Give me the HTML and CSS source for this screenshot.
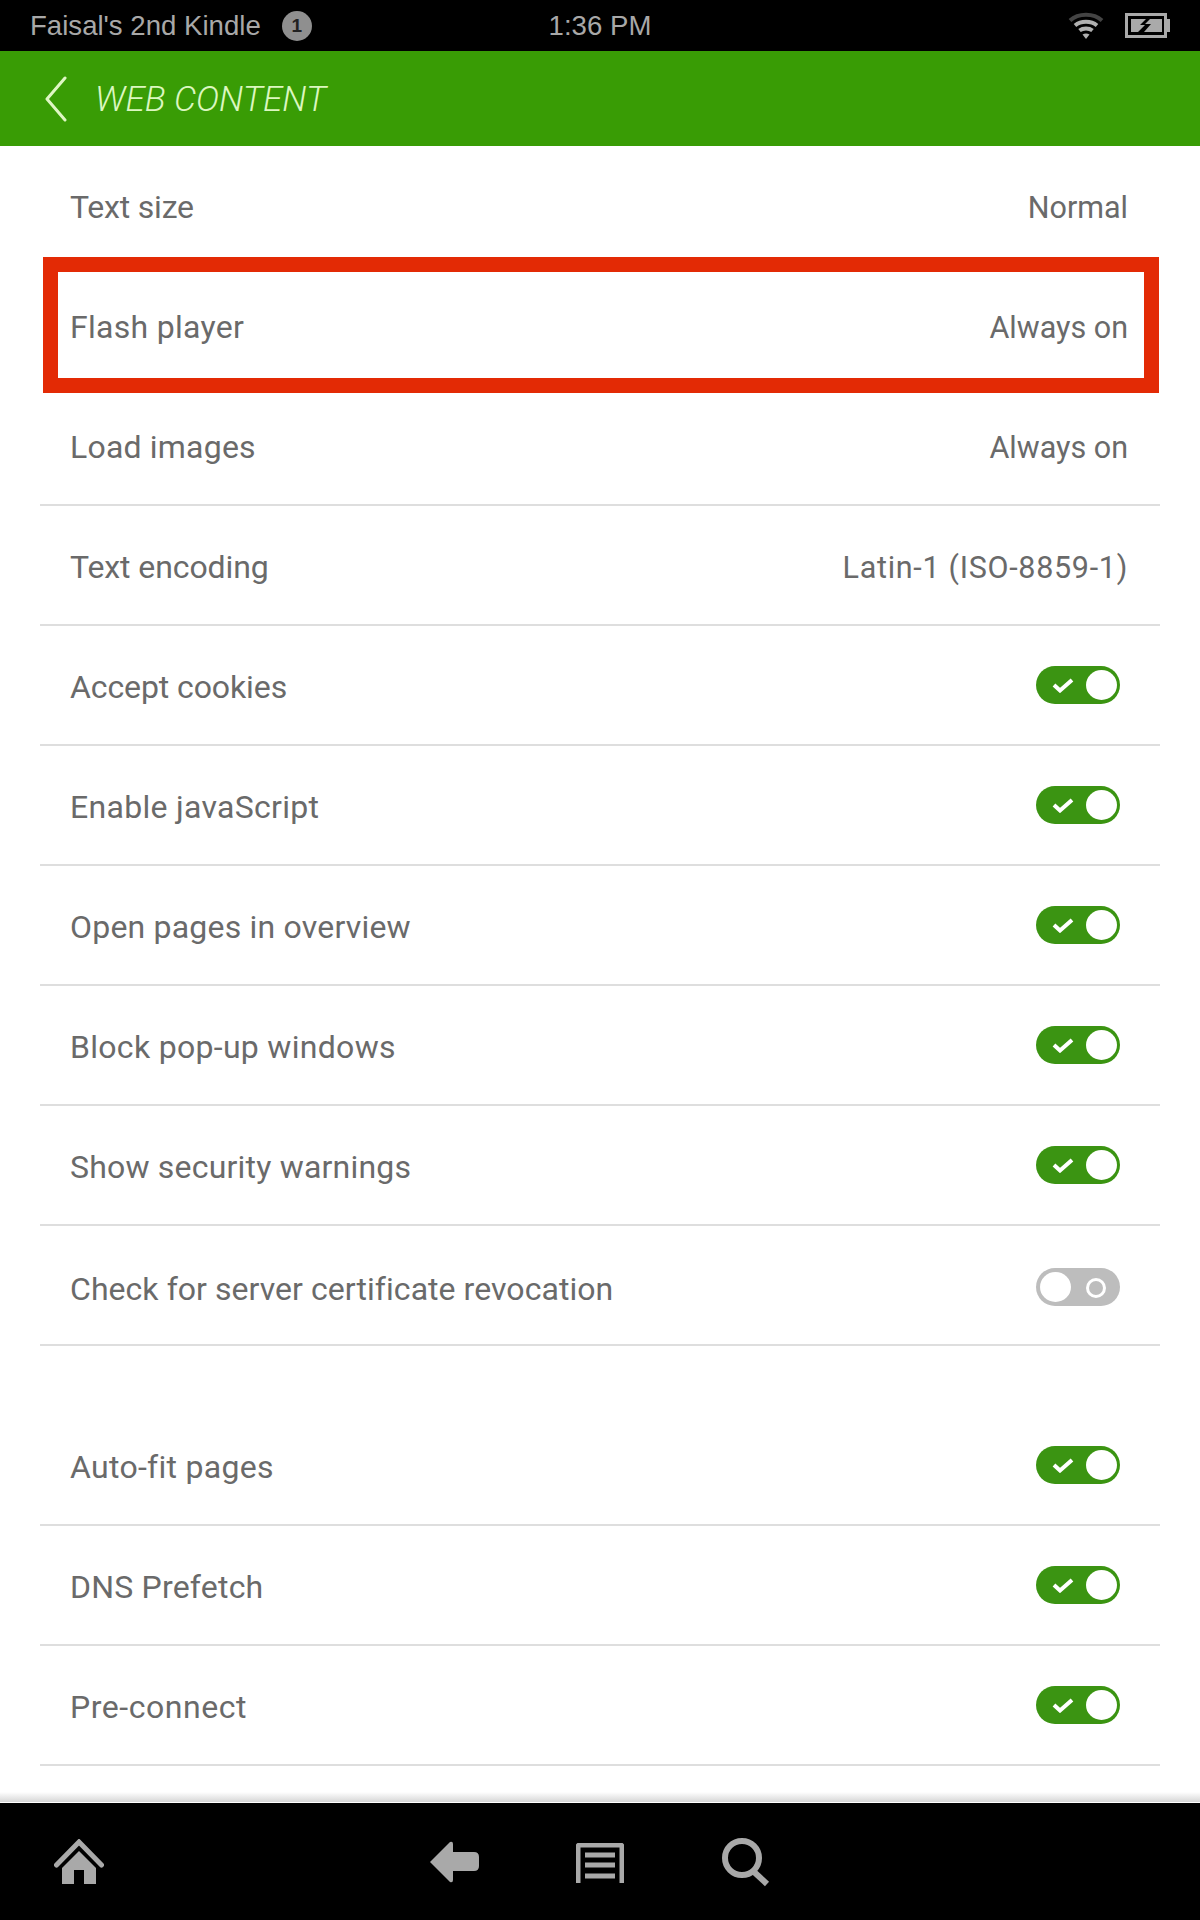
FILE: index.html
```html
<!DOCTYPE html>
<html lang="en">
<head>
<meta charset="utf-8">
<title>Web Content</title>
<link rel="stylesheet" href="styles.css">
</head>
<body>
<div class="screen">
  <div class="status">
    <div class="status-left"><span>Faisal's 2nd Kindle</span><span class="badge">1</span></div>
    <div class="status-time">1:36 PM</div>
    <div class="status-right">
      <svg class="wifi" width="36" height="28" viewBox="0 0 36 28"><path d="M2 8.500C10.500 0.800 25.500 0.800 34 8.500" class="wifi-dim"/><path d="M7 13.500C13 8.500 23 8.500 29 13.500M11.500 18.500C15 15.800 21 15.800 24.500 18.500" class="wifi-on"/><path d="M14.500 22.500Q18 20.500 21.500 22.500L18 27Z" class="wifi-dot"/></svg>
      <svg class="battery" width="45" height="25" viewBox="0 0 45 25"><path d="M1.500 1.500H40.500V23.500H1.500Z" class="batt-body"/><rect x="41" y="6" width="4" height="13" class="batt-fill"/><path d="M6 6H21L15 12H20L13 19H6ZM37 6H25L20 11H26L19 19H37Z" class="batt-fill"/></svg>
    </div>
  </div>
  <div class="header">
    <svg class="chevron" width="24" height="46" viewBox="0 0 24 46"><path d="M21 2L3 23L21 44"/></svg>
    <h1 class="title">WEB CONTENT</h1>
  </div>
  <main class="content">
    <div class="group">
      <div class="row plain"><span class="tighter">Text size</span><span class="value">Normal</span></div>
      <div class="row plain"><span class="wide">Flash player</span><span class="value">Always on</span><div class="highlight"></div></div>
      <div class="row"><span>Load images</span><span class="value">Always on</span></div>
      <div class="row"><span class="tight">Text encoding</span><span class="value spaced">Latin-1 (ISO-8859-1)</span></div>
      <div class="row"><span class="tight">Accept cookies</span><span class="toggle on"><svg width="22" height="16" viewBox="0 0 22 16"><path d="M2 8L8 13.500L20 3"/></svg><i></i></span></div>
      <div class="row"><span class="wide">Enable javaScript</span><span class="toggle on"><svg width="22" height="16" viewBox="0 0 22 16"><path d="M2 8L8 13.500L20 3"/></svg><i></i></span></div>
      <div class="row"><span>Open pages in overview</span><span class="toggle on"><svg width="22" height="16" viewBox="0 0 22 16"><path d="M2 8L8 13.500L20 3"/></svg><i></i></span></div>
      <div class="row"><span class="wide">Block pop-up windows</span><span class="toggle on"><svg width="22" height="16" viewBox="0 0 22 16"><path d="M2 8L8 13.500L20 3"/></svg><i></i></span></div>
      <div class="row"><span>Show security warnings</span><span class="toggle on"><svg width="22" height="16" viewBox="0 0 22 16"><path d="M2 8L8 13.500L20 3"/></svg><i></i></span></div>
      <div class="row low"><span class="slim">Check for server certificate revocation</span><span class="toggle off"><i></i><b></b></span></div>
    </div>
    <div class="group second">
      <div class="row"><span class="wide">Auto-fit pages</span><span class="toggle on"><svg width="22" height="16" viewBox="0 0 22 16"><path d="M2 8L8 13.500L20 3"/></svg><i></i></span></div>
      <div class="row"><span>DNS Prefetch</span><span class="toggle on"><svg width="22" height="16" viewBox="0 0 22 16"><path d="M2 8L8 13.500L20 3"/></svg><i></i></span></div>
      <div class="row"><span class="wider">Pre-connect</span><span class="toggle on"><svg width="22" height="16" viewBox="0 0 22 16"><path d="M2 8L8 13.500L20 3"/></svg><i></i></span></div>
    </div>
  </main>
  <nav class="bottom">
    <svg class="nav-home" width="50" height="46" viewBox="0 0 50 46"><path d="M2.500 26L25 3L47.500 26" class="nav-line"/><path d="M25 12L42 29V45H30V31H20V45H8V29Z" class="nav-fill"/></svg>
    <svg class="nav-back" width="50" height="42" viewBox="0 0 50 42"><path d="M0 21L20 1Q23 0 23 3V11H44Q49 11 49 16V25Q49 30 44 30H23V39Q23 42 20 41Z" class="nav-fill"/></svg>
    <svg class="nav-menu" width="48" height="40" viewBox="0 0 48 40"><path d="M2 40V4Q2 2 4 2H44Q46 2 46 4V40" class="nav-stroke"/><path d="M9 12H39M9 22H39M9 33H39" class="nav-stroke"/></svg>
    <svg class="nav-search" width="50" height="50" viewBox="0 0 50 50"><circle cx="20" cy="20" r="17" class="nav-stroke thick"/><path d="M31 33L45 46" class="nav-stroke thick"/></svg>
  </nav>
</div>
</body>
</html>
```
FILE: styles.css
```css
* { box-sizing: border-box; }
html, body { margin: 0; padding: 0; }
body { background: #fff; font-family: "Roboto", "Liberation Sans", sans-serif; }
.screen { width: 1200px; height: 1920px; display: flex; flex-direction: column; overflow: hidden; }

.status { height: 51px; flex: none; background: #000; color: #a8a8a8; display: grid; grid-template-columns: 1fr auto 1fr; align-items: center; padding: 0 30px 0 30px; font-family: "Liberation Sans", Arial, sans-serif; font-size: 27.6px; }
.status-left { display: flex; align-items: center; gap: 21px; }
.badge { width: 30px; height: 30px; border-radius: 50%; background: #8f8f8f; color: #222; font-size: 19px; font-weight: bold; display: flex; align-items: center; justify-content: center; }
.status-right { display: flex; justify-content: flex-end; align-items: center; gap: 21px; }
.wifi path { fill: none; stroke-width: 4; }
.wifi .wifi-dim { stroke: #444; }
.wifi .wifi-on { stroke: #b0b0b0; }
.wifi .wifi-dot { fill: #b0b0b0; stroke: none; }
.batt-body { fill: none; stroke: #aaa; stroke-width: 3; }
.batt-fill { fill: #aaa; }

.header { height: 95px; flex: none; background: #399c05; display: flex; align-items: center; padding-left: 44px; gap: 27px; }
.chevron path { fill: none; stroke: #dff7c4; stroke-width: 3; stroke-linecap: round; stroke-linejoin: round; }
.title { margin: 2px 0 0; color: #dcf7c0; font-size: 35px; font-weight: 300; font-style: italic; }

.content { flex: 1; min-height: 0; overflow: hidden; position: relative; }
.content::after { content: ""; position: absolute; left: 0; right: 0; bottom: 0; height: 10px; background: linear-gradient(#fff, #d6d6d6); border-bottom: 1px solid #fff; }
.group { margin: 0 40px; }
.second { margin-top: 60px; }
.row { height: 120px; display: flex; align-items: center; justify-content: space-between; padding: 4px 32px 0 30px; border-bottom: 2px solid #dedede; color: #6a6a6a; font-size: 32px; letter-spacing: 0.2px; position: relative; }
.row.plain { border-bottom-color: transparent; }
.row.low { padding-top: 7px; }
.tight { letter-spacing: -0.1px; }
.tighter { letter-spacing: -0.2px; }
.slim { letter-spacing: 0.05px; }
.wide { letter-spacing: 0.3px; }
.wider { letter-spacing: 0.55px; }
.value { font-size: 30.5px; letter-spacing: 0; }
.value.spaced { letter-spacing: 0.7px; }
.highlight { position: absolute; left: 3px; right: 1px; top: -9px; bottom: -9px; border: 15px solid #e32a05; }

.toggle { width: 84px; height: 38px; margin-right: 8px; margin-top: -5px; border-radius: 19px; display: flex; align-items: center; position: relative; }
.toggle i { position: absolute; top: 4px; width: 31px; height: 30px; border-radius: 50%; background: #fff; }
.toggle.on { background: #3b9412; }
.toggle.on i { right: 3px; }
.toggle.on svg { margin-left: 16px; }
.toggle.on path { fill: none; stroke: #fff; stroke-width: 4; }
.toggle.off { background: #bdbdbd; margin-top: -4px; }
.toggle.off i { left: 4px; }
.toggle.off b { position: absolute; left: 50px; top: 10px; width: 20px; height: 20px; border-radius: 50%; border: 3px solid #fff; }

.bottom { height: 117px; flex: none; background: #000; display: flex; align-items: center; position: relative; padding-left: 54px; }
.nav-fill { fill: #a9a9a9; }
.nav-line { fill: none; stroke: #a9a9a9; stroke-width: 5; stroke-linecap: round; }
.nav-stroke { fill: none; stroke: #a9a9a9; stroke-width: 5; }
.nav-stroke.thick { stroke-width: 6; }
.nav-back { margin-left: 326px; }
.nav-menu { margin-left: 96px; margin-top: 3px; }
.nav-search { margin-left: 98px; margin-top: 3px; }
```
